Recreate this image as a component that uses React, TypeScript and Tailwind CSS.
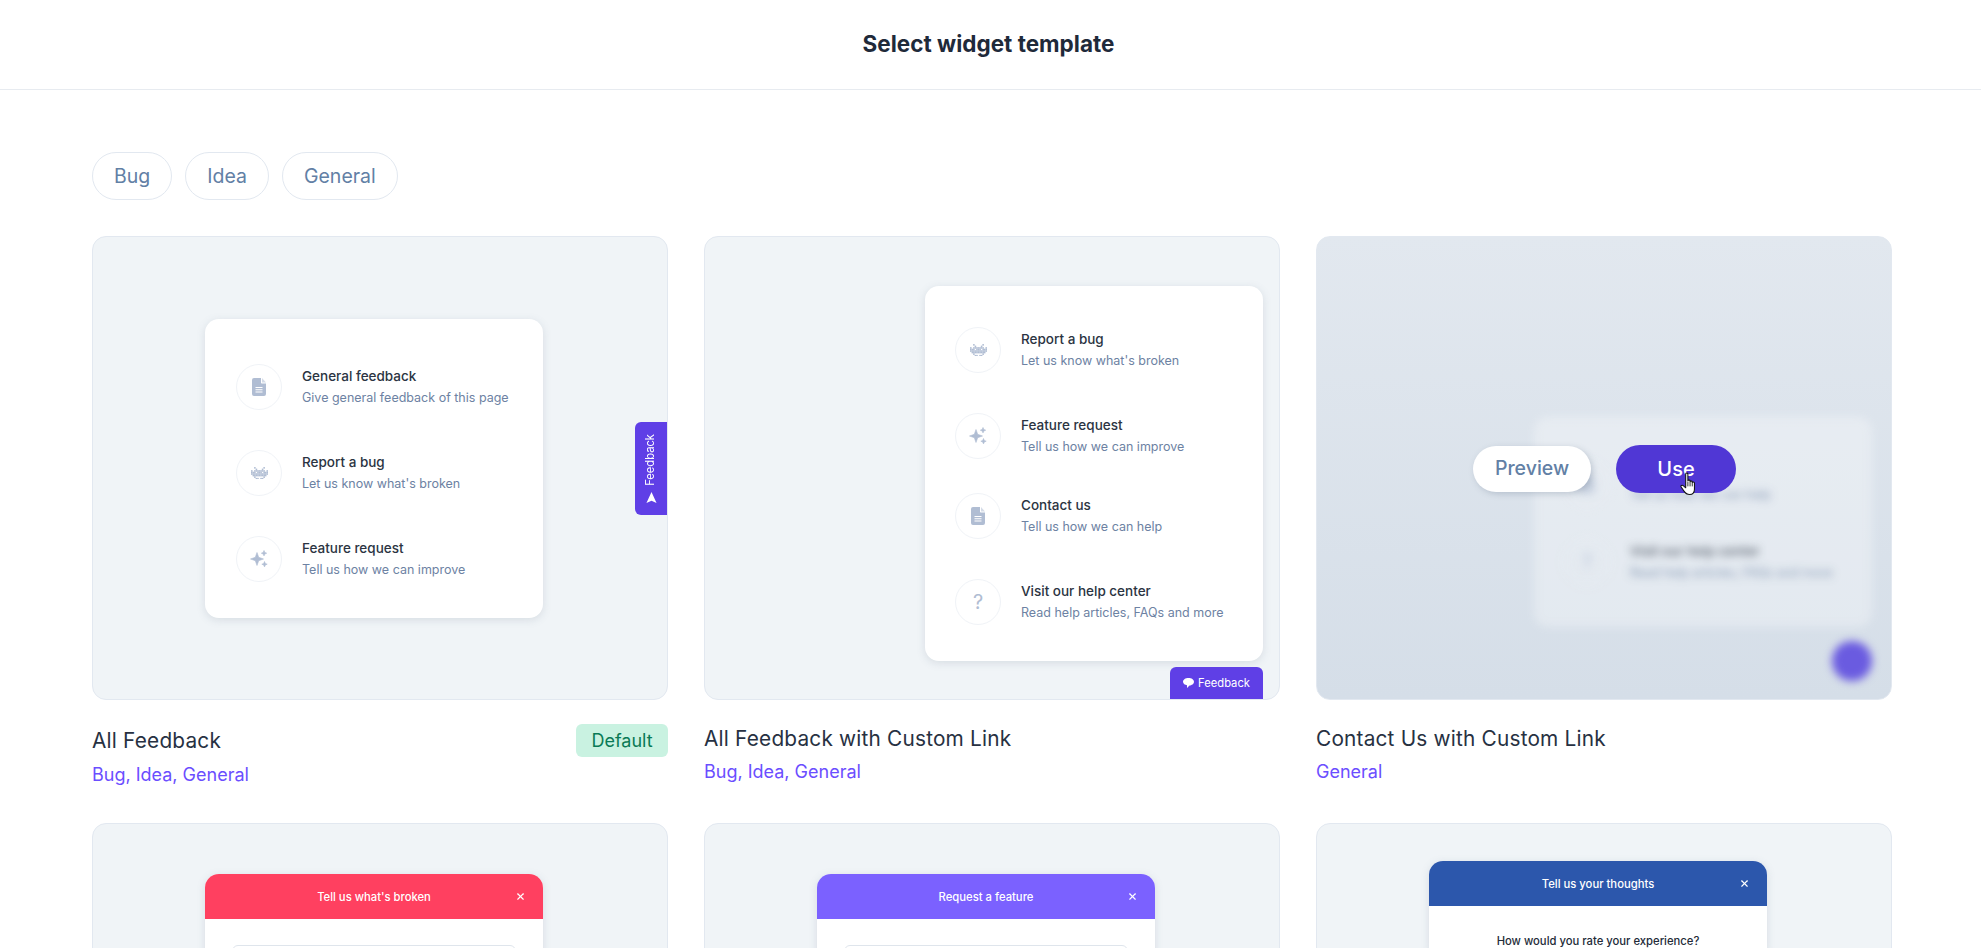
import { X } from "lucide-react";
import type { ReactNode } from "react";

function DocIcon() {
  return (
    <svg width="14" height="18" viewBox="0 0 14 18" fill="none">
      <path d="M2 0h7v4.5c0 .6.4 1 1 1h4V16a2 2 0 0 1-2 2H2a2 2 0 0 1-2-2V2a2 2 0 0 1 2-2z" fill="#b0bdd3" />
      <path d="M10 0l4 4.5h-4z" fill="#b0bdd3" opacity="0.55" />
      <path d="M3.5 9.5h7M3.5 11.8h7M3.5 14h7" stroke="#fff" strokeWidth="1.1" />
    </svg>
  );
}

const invader = [
  "..X.....X..",
  "...X...X...",
  "X.XXXXXXX.X",
  "XXX.XXX.XXX",
  "XXXXXXXXXXX",
  ".XXXXXXXXX.",
  "..X.....X..",
  "...XX.XX...",
];

function BugIcon() {
  return (
    <svg width="17" height="12.500" viewBox="0 0 11 8" fill="#b0bdd3">
      {invader.map((line, y) =>
        line.split("").map((c, x) => (c === "X" ? <rect key={x + "-" + y} x={x} y={y} width="1.02" height="1.02" /> : null)),
      )}
    </svg>
  );
}

function SparkIcon() {
  return (
    <svg width="18" height="18" viewBox="0 0 18 18" fill="#b0bdd3" stroke="#b0bdd3" strokeWidth="0.6" strokeLinejoin="round">
      <path d="M7 2.500L8.700 7.300 13.500 9 8.700 10.700 7 15.500 5.300 10.700 .5 9 5.300 7.300z" />
      <path d="M14 .5l.8 1.900 1.900.8-1.900.8-.8 1.900-.8-1.900-1.900-.8 1.900-.8z" />
      <path d="M14.500 11.500l.8 1.900 1.900.8-1.900.8-.8 1.900-.8-1.900-1.900-.8 1.900-.8z" />
    </svg>
  );
}

function Row({ icon, title, sub, className }: { icon: ReactNode; title: string; sub: string; className?: string }) {
  return (
    <div className={"flex items-center " + (className ?? "")}>
      <div className="flex h-[46px] w-[46px] shrink-0 items-center justify-center rounded-full border border-[#f0f3f7] text-[20px] text-[#b0bdd3]">
        {icon}
      </div>
      <div className="mb-px ml-[20px]">
        <div className="text-[13.500px] leading-5 font-medium text-[#2b3442]">{title}</div>
        <div className="mt-[2px] text-[12.500px] leading-5 text-[#6d82a3]">{sub}</div>
      </div>
    </div>
  );
}

function FormHead({ title, color }: { title: string; color: string }) {
  return (
    <div className={"flex h-[45px] items-center justify-center rounded-t-[14px] pt-px " + color}>
      <span className="text-[11.250px] font-medium text-white">{title}</span>
      <X className="absolute right-[17px] top-[17px]" size={11} color="#fff" strokeWidth={2.5} />
    </div>
  );
}

function Hand() {
  return (
    <svg className="absolute left-[363px] top-[235px]" width="19" height="24" viewBox="0 0 20 25">
      <path
        d="M6 2c0-1.300 2.300-1.300 2.300 0v7c0-1 2.300-1 2.300 0v1c0-1 2.300-1 2.300 0v1c0-1 2.300-.8 2.300.3V18c0 3-1.700 5.500-5 5.500-3 0-4.500-1-6-3.500L1.200 15.700c-.8-1.500 1-2.500 2.200-1.500L6 16.500z"
        fill="#fff"
        stroke="#111"
        strokeWidth="1.100"
        strokeLinejoin="round"
      />
      <path d="M8.300 10v5M10.600 10.500v4.500M12.900 11v4" stroke="#111" strokeWidth="0.9" />
    </svg>
  );
}

export default function App() {
  return (
    <div className="h-screen overflow-hidden bg-white font-['Inter',sans-serif]">
      <header className="flex h-[90px] items-center justify-center border-b border-[#e7ebf0] pb-[2px] pr-[4px]">
        <h1 className="text-[22.500px] font-bold text-[#1f2a3a]">Select widget template</h1>
      </header>

      <main className="pl-[92px] pr-[89px]">
        <div className="mt-[62px] flex gap-[13px]">
          {["Bug", "Idea", "General"].map((t) => (
            <button key={t} className="h-[48px] rounded-full border border-[#e2e8f0] px-[21px] pt-px text-[19.500px] text-[#6280a5]">
              {t}
            </button>
          ))}
        </div>

        <div className="mt-[36px] grid grid-cols-[576px_576px_576px] gap-x-[36px] gap-y-[36px]">
          {/* All feedback */}
          <div>
            <div className="relative h-[464px] rounded-[14px] border border-[#e2e8f0] bg-[#f0f4f7] pl-[112px] pt-[82px]">
              <div className="h-[299px] w-[338px] rounded-[14px] bg-white pl-[31px] pt-[45px] shadow-[0_2px_8px_rgba(100,116,139,0.18)]">
                <Row className="mb-[40px]" icon={<DocIcon />} title="General feedback" sub="Give general feedback of this page" />
                <Row className="mb-[40px]" icon={<BugIcon />} title="Report a bug" sub="Let us know what's broken" />
                <Row icon={<SparkIcon />} title="Feature request" sub="Tell us how we can improve" />
              </div>
              <div className="absolute right-0 top-[185px] flex h-[93px] w-[32px] flex-col items-center justify-center gap-[6px] rounded-l-[6px] bg-[#5f3fe6] text-white">
                <span className="rotate-180 text-[11.200px] leading-none [writing-mode:vertical-rl]">Feedback</span>
                <svg width="11" height="11" viewBox="0 0 11 12" fill="#fff">
                  <path d="M5.500 0L11 12 5.500 9.500 0 12z" />
                </svg>
              </div>
            </div>
            <div className="mt-[24px] flex h-[33px] items-center justify-between">
              <span className="text-[20.800px] tracking-[0.2px] text-[#273142]">All Feedback</span>
              <span className="flex h-[33px] w-[92px] items-center justify-center rounded-md bg-[#c9f2e1] text-[18px] text-[#0a7a55]">Default</span>
            </div>
            <div className="mt-[6px] text-[18px] leading-6 text-[#6b4eff]">Bug, Idea, General</div>
          </div>

          {/* Custom link */}
          <div>
            <div className="relative h-[464px] rounded-[14px] border border-[#e2e8f0] bg-[#f0f4f7] pl-[220px] pt-[49px]">
              <div className="h-[375px] w-[338px] rounded-[14px] bg-white pl-[30px] pt-[41px] shadow-[0_2px_8px_rgba(100,116,139,0.18)]">
                <Row className="mb-[40px]" icon={<BugIcon />} title="Report a bug" sub="Let us know what's broken" />
                <Row className="mb-[34px]" icon={<SparkIcon />} title="Feature request" sub="Tell us how we can improve" />
                <Row className="mb-[40px]" icon={<DocIcon />} title="Contact us" sub="Tell us how we can help" />
                <Row icon="?" title="Visit our help center" sub="Read help articles, FAQs and more" />
              </div>
              <div className="absolute bottom-0 right-[16px] flex h-[32px] w-[93px] items-center justify-center gap-[4px] rounded-t-[6px] bg-[#5f3fe6] text-[11.200px] text-white">
                <svg width="11" height="10" viewBox="0 0 11 10" fill="#fff">
                  <path d="M5.500 0C8.500 0 11 1.600 11 3.800S8.500 7.500 6.500 7.500L4 10V7.300C2 7 0 5.800 0 3.800 0 1.600 2.500 0 5.500 0z" />
                </svg>
                Feedback
              </div>
            </div>
            <div className="mt-[23px] text-[20.800px] leading-8 tracking-[0.2px] text-[#273142]">All Feedback with Custom Link</div>
            <div className="mt-[5px] text-[18px] leading-6 text-[#6b4eff]">Bug, Idea, General</div>
          </div>

          {/* Contact us, hovered */}
          <div>
            <div className="relative h-[464px] overflow-hidden rounded-[14px] border border-[#e2e8f0] bg-gradient-to-b from-[#e2e8ef] to-[#d5dee8]">
              <div className="ml-[217px] mt-[180px] h-[210px] w-[338px] rounded-[14px] bg-white/40 pl-[30px] pt-[44px] opacity-75 blur-[4px]">
                <Row className="mb-[32px]" icon={<DocIcon />} title="Contact us" sub="Tell us how we can help" />
                <Row icon="?" title="Visit our help center" sub="Read help articles, FAQs and more" />
              </div>
              <div className="absolute bottom-[18px] right-[19px] h-[40px] w-[40px] rounded-full bg-[#6a5be0] blur-[4px]" />
              <div className="absolute inset-0 flex items-center justify-center pl-px pt-[2px]">
                <button className="h-[46px] w-[118px] rounded-full bg-white text-[19.500px] font-medium text-[#6280a5] shadow-[2px_2px_6px_rgba(100,116,139,0.3)]">Preview</button>
                <button className="ml-[25px] h-[48px] w-[120px] rounded-full bg-[#5037d5] text-[20px] font-medium text-white">Use</button>
              </div>
              <Hand />
            </div>
            <div className="mt-[23px] text-[20.800px] leading-8 tracking-[0.2px] text-[#273142]">Contact Us with Custom Link</div>
            <div className="mt-[5px] text-[18px] leading-6 text-[#6b4eff]">General</div>
          </div>

          {/* Second row, cut by the window */}
          <div className="h-[464px] rounded-[14px] border border-[#e2e8f0] bg-[#f0f4f7] pl-[112px] pt-[50px]">
            <div className="relative w-[338px] rounded-t-[14px] bg-white shadow-[0_2px_8px_rgba(100,116,139,0.18)]">
              <FormHead title="Tell us what's broken" color="bg-[#ff4060]" />
              <div className="mx-[27px] mt-[26px] h-[120px] rounded-md border border-[#dfe5ec]" />
            </div>
          </div>
          <div className="h-[464px] rounded-[14px] border border-[#e2e8f0] bg-[#f0f4f7] pl-[112px] pt-[50px]">
            <div className="relative w-[338px] rounded-t-[14px] bg-white shadow-[0_2px_8px_rgba(100,116,139,0.18)]">
              <FormHead title="Request a feature" color="bg-[#7b61ff]" />
              <div className="mx-[27px] mt-[26px] h-[120px] rounded-md border border-[#dfe5ec]" />
            </div>
          </div>
          <div className="h-[464px] rounded-[14px] border border-[#e2e8f0] bg-[#f0f4f7] pl-[112px] pt-[37px]">
            <div className="relative w-[338px] rounded-t-[14px] bg-white shadow-[0_2px_8px_rgba(100,116,139,0.18)]">
              <FormHead title="Tell us your thoughts" color="bg-[#2c57ac]" />
              <div className="pt-[25px] text-center text-[11.250px] leading-5 font-medium text-[#232b38]">How would you rate your experience?</div>
            </div>
          </div>
        </div>
      </main>
    </div>
  );
}
